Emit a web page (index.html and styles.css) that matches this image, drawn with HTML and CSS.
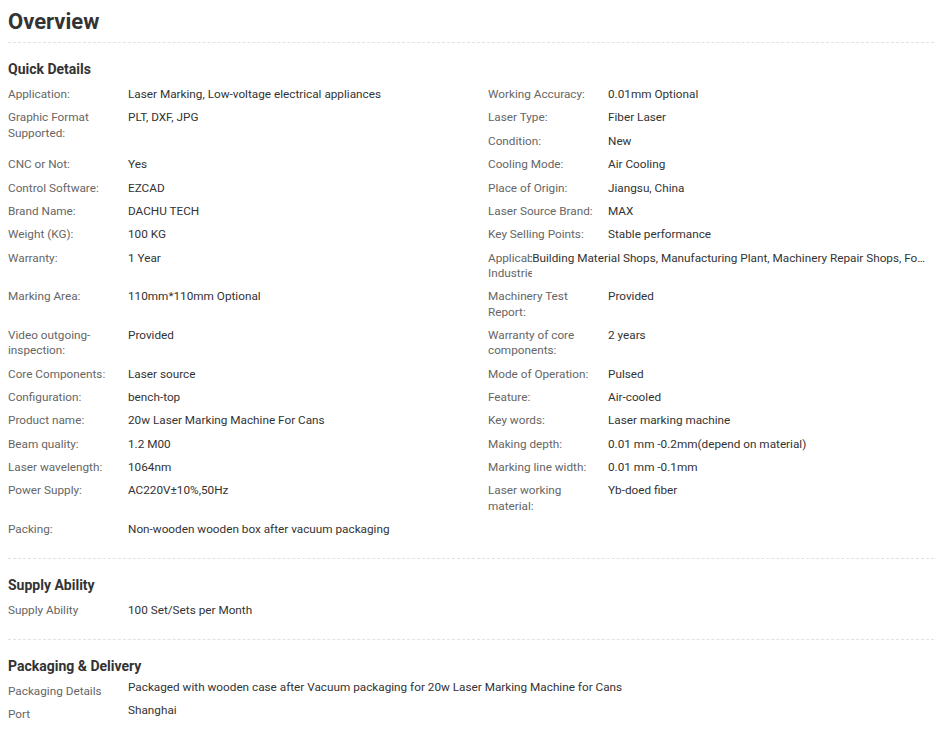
FILE: index.html
```html
<!DOCTYPE html>
<html lang="en">
<head>
    <meta charset="UTF-8">
    <meta name="viewport" content="width=device-width, initial-scale=1.0">
    <title>Overview</title>
    <link rel="stylesheet" href="styles.css">
</head>
<body>
    <div class="overview">
        <h1 class="overview-title">Overview</h1>

        <!-- Quick details: items float in two columns -->
        <div class="detail-section">
            <h3 class="section-title">Quick Details</h3>
            <div class="entry-list">
                <div class="entry-item"><span class="entry-label">Application:</span><span class="entry-value">Laser Marking, Low-voltage electrical appliances</span></div>
                <div class="entry-item is-right"><span class="entry-label">Working Accuracy:</span><span class="entry-value">0.01mm Optional</span></div>
                <div class="entry-item"><span class="entry-label">Graphic Format Supported:</span><span class="entry-value">PLT, DXF, JPG</span></div>
                <div class="entry-item is-right"><span class="entry-label">Laser Type:</span><span class="entry-value">Fiber Laser</span></div>
                <div class="entry-item is-right"><span class="entry-label">Condition:</span><span class="entry-value">New</span></div>
                <div class="entry-item"><span class="entry-label">CNC or Not:</span><span class="entry-value">Yes</span></div>
                <div class="entry-item is-right"><span class="entry-label">Cooling Mode:</span><span class="entry-value">Air Cooling</span></div>
                <div class="entry-item"><span class="entry-label">Control Software:</span><span class="entry-value">EZCAD</span></div>
                <div class="entry-item is-right"><span class="entry-label">Place of Origin:</span><span class="entry-value">Jiangsu, China</span></div>
                <div class="entry-item"><span class="entry-label">Brand Name:</span><span class="entry-value">DACHU TECH</span></div>
                <div class="entry-item is-right"><span class="entry-label">Laser Source Brand:</span><span class="entry-value">MAX</span></div>
                <div class="entry-item"><span class="entry-label">Weight (KG):</span><span class="entry-value">100 KG</span></div>
                <div class="entry-item is-right"><span class="entry-label">Key Selling Points:</span><span class="entry-value">Stable performance</span></div>
                <div class="entry-item"><span class="entry-label">Warranty:</span><span class="entry-value">1 Year</span></div>
                <div class="entry-item is-right"><span class="entry-label">Applicable Industries:</span><span class="entry-value is-clipped">Building Material Shops, Manufacturing Plant, Machinery Repair Shops, Food &amp; Beverage Factory, Farms, Restaurant, Home Use, Retail, Food Shop, Printing Shops, Construction works , Energy &amp; Mining, Shop</span></div>
                <div class="entry-item"><span class="entry-label">Marking Area:</span><span class="entry-value">110mm*110mm Optional</span></div>
                <div class="entry-item is-right"><span class="entry-label">Machinery Test Report:</span><span class="entry-value">Provided</span></div>
                <div class="entry-item"><span class="entry-label">Video outgoing-inspection:</span><span class="entry-value">Provided</span></div>
                <div class="entry-item is-right"><span class="entry-label">Warranty of core components:</span><span class="entry-value">2 years</span></div>
                <div class="entry-item"><span class="entry-label">Core Components:</span><span class="entry-value">Laser source</span></div>
                <div class="entry-item is-right"><span class="entry-label">Mode of Operation:</span><span class="entry-value">Pulsed</span></div>
                <div class="entry-item"><span class="entry-label">Configuration:</span><span class="entry-value">bench-top</span></div>
                <div class="entry-item is-right"><span class="entry-label">Feature:</span><span class="entry-value">Air-cooled</span></div>
                <div class="entry-item"><span class="entry-label">Product name:</span><span class="entry-value">20w Laser Marking Machine For Cans</span></div>
                <div class="entry-item is-right"><span class="entry-label">Key words:</span><span class="entry-value">Laser marking machine</span></div>
                <div class="entry-item"><span class="entry-label">Beam quality:</span><span class="entry-value">1.2 M00</span></div>
                <div class="entry-item is-right"><span class="entry-label">Making depth:</span><span class="entry-value">0.01 mm -0.2mm(depend on material)</span></div>
                <div class="entry-item"><span class="entry-label">Laser wavelength:</span><span class="entry-value">1064nm</span></div>
                <div class="entry-item is-right"><span class="entry-label">Marking line width:</span><span class="entry-value">0.01 mm -0.1mm</span></div>
                <div class="entry-item"><span class="entry-label">Power Supply:</span><span class="entry-value">AC220V±10%,50Hz</span></div>
                <div class="entry-item is-right"><span class="entry-label">Laser working material:</span><span class="entry-value">Yb-doed fiber</span></div>
                <div class="entry-item"><span class="entry-label">Packing:</span><span class="entry-value">Non-wooden wooden box after vacuum packaging</span></div>
            </div>
        </div>

        <div class="detail-section">
            <h3 class="section-title">Supply Ability</h3>
            <div class="entry-list">
                <div class="entry-item"><span class="entry-label">Supply Ability</span><span class="entry-value">100 Set/Sets per Month</span></div>
            </div>
        </div>

        <div class="detail-section">
            <h3 class="section-title">Packaging &amp; Delivery</h3>
            <div class="entry-list entry-list--full">
                <div class="entry-item"><span class="entry-label">Packaging Details</span><span class="entry-value">Packaged with wooden case after Vacuum packaging for 20w Laser Marking Machine for Cans</span></div>
                <div class="entry-item"><span class="entry-label">Port</span><span class="entry-value">Shanghai</span></div>
            </div>
        </div>
    </div>
</body>
</html>
```

FILE: styles.css
```css
body {
    margin: 0;
    font-family: Roboto, "Liberation Sans", Arial, sans-serif;
    color: #333;
    background-color: #fff;
}

.overview {
    padding: 8px 4px 0 8px;
}

.overview-title {
    margin: 0;
    padding-bottom: 6px;
    font-size: 22px;
    line-height: 28px;
    font-weight: 700;
    color: #333;
    border-bottom: 1px dashed #e2e2e2;
}

.detail-section {
    padding: 16px 0 12.5px;
    border-bottom: 1px dashed #e2e2e2;
}

.detail-section:last-child {
    border-bottom: none;
}

.section-title {
    margin: 0 0 8px;
    font-size: 14px;
    line-height: 20px;
    font-weight: 700;
    color: #333;
}

/* floated items, so a two-line entry pushes only its own side down */
.entry-list {
    display: flow-root;
    font-size: 11.75px;
    line-height: 15.2px;
}

.entry-item {
    float: left;
    display: flex;
    width: 480px;
    margin-bottom: 8.2px;
    padding-right: 8px;
    box-sizing: border-box;
}

.entry-item.is-right {
    width: calc(100% - 480px);
}

.entry-label {
    width: 120px;
    color: #666;
    overflow: hidden;
}

.entry-value {
    color: #333;
}

.entry-value.is-clipped {
    white-space: nowrap;
    overflow: hidden;
    text-overflow: ellipsis;
}

.entry-list--full .entry-item {
    width: 100%;
}

.entry-list--full .entry-value {
    margin-top: -4px;
}
```
